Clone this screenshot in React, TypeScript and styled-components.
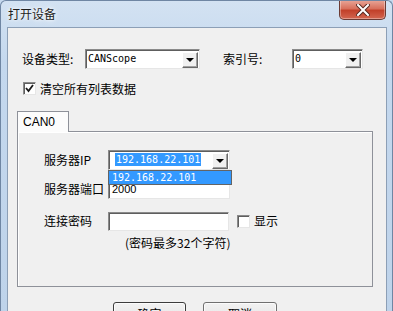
import styled, { createGlobalStyle } from "styled-components";

const GlobalStyle = createGlobalStyle`
  html, body {
    margin: 0;
    padding: 0;
    overflow: hidden;
    background: #c6d9ee;
  }
  body {
    width: 393px;
    height: 311px;
    font-family: "Noto Sans CJK SC", "Liberation Sans", sans-serif;
    font-size: 12px;
    line-height: 14px;
    color: #000;
  }
`;

export default function App() {
  return (
    <>
      <GlobalStyle />
      <Window>
        <TitleBar>
          <Title>打开设备</Title>
          <CloseButton>
            <svg width="14" height="12" viewBox="0 0 14 12">
              <path
                d="M2 1 L12 11 M12 1 L2 11"
                stroke="#5a2a22"
                strokeWidth="4"
                strokeLinecap="square"
              />
              <path
                d="M2 1 L12 11 M12 1 L2 11"
                stroke="#ffffff"
                strokeWidth="2"
                strokeLinecap="square"
              />
            </svg>
          </CloseButton>
        </TitleBar>
        <Client>
          <TopRow>
            <Label width={63}>设备类型:</Label>
            <Combo width={115}>
              <ComboText>CANScope</ComboText>
              <DropButton>
                <Arrow />
              </DropButton>
            </Combo>
            <Label width={69} style={{ marginLeft: 23 }}>
              索引号:
            </Label>
            <Combo width={71}>
              <ComboText>0</ComboText>
              <DropButton>
                <Arrow />
              </DropButton>
            </Combo>
          </TopRow>
          <CheckRow>
            <CheckBox>
              <svg width="9" height="9" viewBox="0 0 9 9">
                <path d="M1 4 L3.5 7 L8 1" stroke="#1a1a1a" strokeWidth="1.8" fill="none" />
              </svg>
            </CheckBox>
            <span>清空所有列表数据</span>
          </CheckRow>
          <Tabs>
            <TabStrip>
              <Tab>CAN0</Tab>
            </TabStrip>
            <Panel>
              <FieldRow top={18}>
                <Label width={64}>服务器IP</Label>
                <Combo width={122}>
                  <ComboText>
                    <Selected>192.168.22.101</Selected>
                  </ComboText>
                  <DropButton>
                    <Arrow />
                  </DropButton>
                  <DropList>192.168.22.101</DropList>
                </Combo>
              </FieldRow>
              <FieldRow top={9}>
                <Label width={64}>服务器端口</Label>
                <Edit width={122}>
                  <EditText>2000</EditText>
                </Edit>
              </FieldRow>
              <FieldRow top={12}>
                <Label width={64}>连接密码</Label>
                <Edit width={121} />
                <CheckBox style={{ marginLeft: 8 }} />
                <span>显示</span>
              </FieldRow>
              <Hint>(密码最多32个字符)</Hint>
            </Panel>
          </Tabs>
          <ButtonRow>
            <PushButton width={73} isDefault>
              确定
            </PushButton>
            <PushButton width={74}>取消</PushButton>
          </ButtonRow>
        </Client>
      </Window>
    </>
  );
}

const Window = styled.div`
  box-sizing: border-box;
  width: 393px;
  height: 311px;
  display: flex;
  flex-direction: column;
  overflow: hidden;
  border: 1px solid #6f86a3;
  border-bottom: none;
  border-radius: 6px 6px 0 0;
  background: linear-gradient(180deg, #d3e2f2 0%, #c4d8ee 20%, #bed3ea 100%);
`;

const TitleBar = styled.div`
  height: 26px;
  display: flex;
  justify-content: space-between;
  align-items: flex-start;
  padding: 0 6px 0 7px;
  flex-shrink: 0;
`;

const Title = styled.div`
  line-height: 26px;
  font-size: 12px;
  color: #1e1e1e;
  text-shadow: 0 0 6px #ffffff, 0 0 3px #ffffff;
`;

const CloseButton = styled.div`
  box-sizing: border-box;
  width: 47px;
  height: 20px;
  margin-top: -1px;
  display: flex;
  align-items: center;
  justify-content: center;
  border: 1px solid #6b3b34;
  border-top: none;
  border-radius: 0 0 5px 5px;
  background: linear-gradient(180deg, #e9a89a 0%, #d8705c 45%, #c2412a 55%, #d36650 100%);
  box-shadow: inset 0 0 0 1px rgba(255, 255, 255, 0.35);
`;

const Client = styled.div`
  flex: 1;
  margin: 0 5px 0 6px;
  border: 1px solid #8c9fb6;
  border-bottom: none;
  background: #f0f0f0;
  display: flex;
  flex-direction: column;
  padding: 0 14px 0 9px;
`;

const TopRow = styled.div`
  display: flex;
  align-items: center;
  height: 20px;
  margin-top: 21px;
  padding-left: 5px;
`;

const Label = styled.div<{ width: number }>`
  width: ${(p) => p.width}px;
  flex-shrink: 0;
  white-space: nowrap;
  font-size: 12px;
`;

const Combo = styled.div<{ width: number }>`
  position: relative;
  box-sizing: border-box;
  width: ${(p) => p.width}px;
  height: 20px;
  display: flex;
  align-items: center;
  background: #ffffff;
  border-top: 1px solid #8a8a8a;
  border-left: 1px solid #8a8a8a;
  border-right: 1px solid #e6e6e6;
  border-bottom: 1px solid #e6e6e6;
  box-shadow: inset 1px 1px 0 #5e5e5e;
`;

const ComboText = styled.div`
  flex: 1;
  padding-left: 2px;
  font-family: "DejaVu Sans Mono", "Liberation Mono", monospace;
  font-size: 10px;
  line-height: 14px;
  white-space: nowrap;
`;

const Selected = styled.span`
  background: #3399ff;
  color: #ffffff;
  padding: 1px 1px;
`;

const DropButton = styled.div`
  box-sizing: border-box;
  width: 16px;
  height: 16px;
  margin-right: 1px;
  margin-top: 1px;
  display: flex;
  align-items: center;
  justify-content: center;
  background: #f0f0f0;
  border-top: 1px solid #ffffff;
  border-left: 1px solid #ffffff;
  border-right: 1px solid #696969;
  border-bottom: 1px solid #696969;
  box-shadow: inset -1px -1px 0 #a0a0a0;
`;

const Arrow = styled.div`
  width: 0;
  height: 0;
  border-left: 4px solid transparent;
  border-right: 4px solid transparent;
  border-top: 4px solid #000000;
`;

const DropList = styled.div`
  position: absolute;
  left: -1px;
  top: 19px;
  box-sizing: border-box;
  width: 124px;
  height: 15px;
  padding-left: 3px;
  border: 1px solid #646464;
  background: #3399ff;
  color: #ffffff;
  font-family: "DejaVu Sans Mono", "Liberation Mono", monospace;
  font-size: 10px;
  line-height: 13px;
  z-index: 2;
`;

const CheckRow = styled.div`
  display: flex;
  align-items: center;
  gap: 4px;
  margin-top: 13px;
  padding-left: 6px;
  height: 13px;
`;

const CheckBox = styled.div`
  box-sizing: border-box;
  width: 13px;
  height: 13px;
  flex-shrink: 0;
  display: flex;
  align-items: center;
  justify-content: center;
  background: #ffffff;
  border-top: 1px solid #8a8a8a;
  border-left: 1px solid #8a8a8a;
  border-right: 1px solid #e6e6e6;
  border-bottom: 1px solid #e6e6e6;
  box-shadow: inset 1px 1px 0 #5e5e5e;
`;

const Tabs = styled.div`
  margin-top: 16px;
  width: 356px;
  display: flex;
  flex-direction: column;
`;

const TabStrip = styled.div`
  display: flex;
  height: 20px;
`;

const Tab = styled.div`
  box-sizing: border-box;
  width: 52px;
  height: 21px;
  padding-left: 5px;
  border: 1px solid #8e9199;
  border-bottom: none;
  background: #fcfcfc;
  font-family: "Liberation Sans", sans-serif;
  font-size: 12px;
  line-height: 20px;
  position: relative;
  z-index: 1;
`;

const Panel = styled.div`
  box-sizing: border-box;
  height: 156px;
  border: 1px solid #8e9199;
  background: #f0f0f0;
  padding-left: 26px;
  display: flex;
  flex-direction: column;
  box-shadow: inset 1px 1px 0 #ffffff;
`;

const FieldRow = styled.div<{ top: number }>`
  display: flex;
  align-items: center;
  height: 20px;
  margin-top: ${(p) => p.top}px;
  span {
    margin-left: 4px;
  }
`;

const Edit = styled.div<{ width: number }>`
  box-sizing: border-box;
  width: ${(p) => p.width}px;
  height: 19px;
  background: #ffffff;
  border-top: 1px solid #8a8a8a;
  border-left: 1px solid #8a8a8a;
  border-right: 1px solid #e6e6e6;
  border-bottom: 1px solid #e6e6e6;
  box-shadow: inset 1px 1px 0 #5e5e5e;
  display: flex;
  align-items: center;
`;

const EditText = styled.div`
  padding-left: 3px;
  font-family: "Liberation Sans", sans-serif;
  font-size: 11px;
`;

const Hint = styled.div`
  margin-top: 5px;
  padding-left: 81px;
  font-size: 12px;
  line-height: 14px;
`;

const ButtonRow = styled.div`
  display: flex;
  gap: 17px;
  margin-top: 15px;
  padding-left: 96px;
`;

const PushButton = styled.div<{ width: number; isDefault?: boolean }>`
  box-sizing: border-box;
  width: ${(p) => p.width}px;
  height: 23px;
  flex-shrink: 0;
  border: 1px solid ${(p) => (p.isDefault ? "#3c3c3c" : "#707070")};
  border-radius: 3px;
  background: linear-gradient(180deg, #f2f2f2 0%, #ebebeb 45%, #dddddd 50%, #cfcfcf 100%);
  box-shadow: inset 0 0 0 1px #fbfbfb;
  display: flex;
  align-items: center;
  justify-content: center;
  font-size: 12px;
`;
